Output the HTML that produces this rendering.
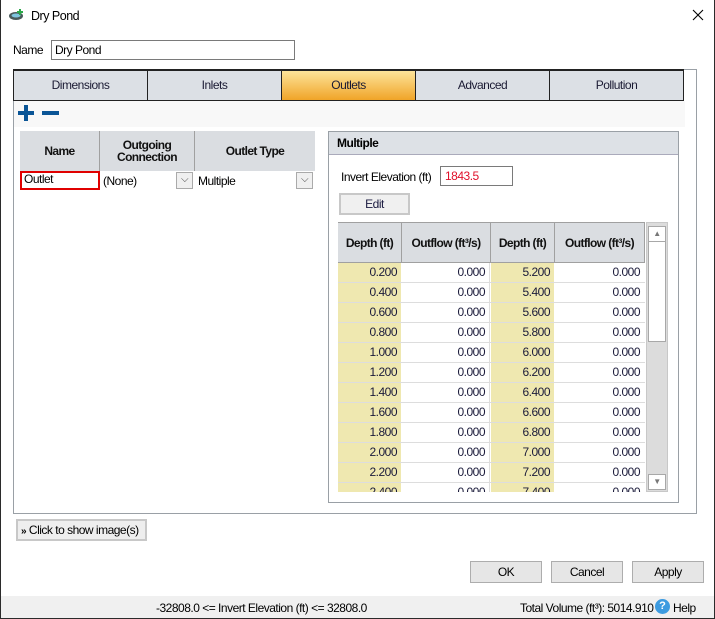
<!DOCTYPE html>
<html><head><meta charset="utf-8"><style>
*{box-sizing:border-box;margin:0;padding:0}
body{width:715px;height:619px;position:relative;background:#fff;font-family:"Liberation Sans",sans-serif;font-size:12px;color:#000;overflow:hidden;letter-spacing:-0.5px;white-space:nowrap}
.a{position:absolute}
.win{left:0;top:0;width:715px;height:619px;border:1px solid #2b2b2b;border-top:none}
.tab{position:absolute;top:70px;height:31px;width:134px;background:#dce0e5;border:1px solid #222;border-left:none;text-align:center;line-height:29px;color:#1a1a33;font-size:12px}
.hd{position:absolute;background:#dadde1;border-right:1px solid #a0a0a0;text-align:center;font-weight:bold;font-size:12px;color:#111;letter-spacing:-0.6px}
.btn{position:absolute;background:#e6e6e6;border:1px solid #adadad;text-align:center;font-size:12px}
.cell{position:absolute;height:19px;line-height:19px;text-align:right;padding-right:4px;font-size:12px;color:#1a1a3a}
.y{background:#efe8b0}
</style></head><body>
<div class="a win"></div>
<!-- title -->
<svg class="a" style="left:8px;top:8px" width="18" height="14" viewBox="0 0 18 14"><ellipse cx="8" cy="8" rx="7" ry="4" fill="#4a5a5a"/><ellipse cx="8" cy="7.5" rx="4.5" ry="2" fill="#7fc6e0"/><path d="M12 1v6M9 4h6" stroke="#2aa84a" stroke-width="2"/></svg>
<div class="a" style="left:31px;top:9px;font-size:12.5px">Dry Pond</div>
<svg class="a" style="left:692px;top:9px" width="12" height="12" viewBox="0 0 12 12"><path d="M1 1L11 11M11 1L1 11" stroke="#000" stroke-width="1.1"/></svg>
<!-- name -->
<div class="a" style="left:13px;top:43px">Name</div>
<div class="a" style="left:51px;top:40px;width:244px;height:20px;border:1px solid #7a7a7a;padding-left:3px;line-height:18px">Dry Pond</div>
<!-- container -->
<div class="a" style="left:13px;top:69px;width:684px;height:445px;border:1px solid #9aa0a6"></div>
<div class="a" style="left:13px;top:69px;width:671px;height:1px;background:#222"></div>
<div class="tab" style="left:13px;border-left:1px solid #222;width:135px">Dimensions</div>
<div class="tab" style="left:148px">Inlets</div>
<div class="tab" style="left:282px;background:linear-gradient(#fde49a,#f0a428)">Outlets</div>
<div class="tab" style="left:416px">Advanced</div>
<div class="tab" style="left:550px">Pollution</div>
<div class="a" style="left:14px;top:101px;width:671px;height:26px;background:#f8f8f8"></div>
<div class="a" style="left:24px;top:105px;width:4px;height:16px;background:#0a5596"></div>
<div class="a" style="left:18px;top:111px;width:16px;height:4px;background:#0a5596"></div>
<div class="a" style="left:42px;top:111px;width:17px;height:4px;background:#0a5596"></div>
<!-- left grid -->
<div class="hd" style="left:20px;top:131px;width:80px;height:40px;line-height:40px">Name</div>
<div class="hd" style="left:100px;top:131px;width:95px;height:40px;line-height:12px;padding-top:8px">Outgoing<br>Connection</div>
<div class="hd" style="left:195px;top:131px;width:120px;height:40px;line-height:40px;border-right:none">Outlet Type</div>
<div class="a" style="left:20px;top:171px;width:80px;height:19px;border:2px solid #e00000;padding-left:2px;line-height:13px">Outlet</div>
<div class="a" style="left:103px;top:174px">(None)</div>
<div class="a" style="left:176px;top:172px;width:17px;height:17px;border:1px solid #aaa;background:#f0f0f0;text-align:center;font-size:10px;line-height:14px;color:#444">⌵</div>
<div class="a" style="left:198px;top:174px">Multiple</div>
<div class="a" style="left:296px;top:172px;width:17px;height:17px;border:1px solid #aaa;background:#f0f0f0;text-align:center;font-size:10px;line-height:14px;color:#444">⌵</div>
<!-- right panel -->
<div class="a" style="left:328px;top:131px;width:351px;height:372px;border:1px solid #9aa0a6"></div>
<div class="a" style="left:329px;top:132px;width:349px;height:23px;background:#dde1e6;border-bottom:1px solid #aab;font-weight:bold;padding-left:8px;line-height:23px">Multiple</div>
<div class="a" style="left:341px;top:170px">Invert Elevation (ft)</div>
<div class="a" style="left:440px;top:166px;width:73px;height:20px;border:1px solid #7a7a7a;color:#e0102a;padding-left:4px;line-height:18px">1843.5</div>
<div class="btn" style="left:339px;top:193px;width:71px;height:22px;line-height:18px;border:2px solid #c8c8c8;background:#f0f0f0;color:#1a1a40">Edit</div>
<div class="a" style="left:338px;top:222px;width:307px;height:270px;overflow:hidden">
<div class="hd" style="left:0;top:0;width:64px;height:40px;line-height:40px;border-top:1px solid #a0a0a0">Depth (ft)</div>
<div class="hd" style="left:64px;top:0;width:89px;height:40px;line-height:40px;border-top:1px solid #a0a0a0">Outflow (ft³/s)</div>
<div class="hd" style="left:153px;top:0;width:64px;height:40px;line-height:40px;border-top:1px solid #a0a0a0">Depth (ft)</div>
<div class="hd" style="left:217px;top:0;width:90px;height:40px;line-height:40px;border-top:1px solid #a0a0a0">Outflow (ft³/s)</div>
<div class="a" style="left:0;top:40px;width:307px;height:1px;background:#a0a0a0"></div>
<div id="rows"></div>
</div>
<!-- scrollbar -->
<div class="a" style="left:646px;top:222px;width:22px;height:270px;background:#dcdcdc;border:1px solid #c8c8c8"></div>
<div class="a" style="left:648px;top:226px;width:18px;height:116px;background:#fff;border:1px solid #a8a8a8"></div>
<div class="a" style="left:648px;top:226px;width:18px;height:16px;background:#fff;border:1px solid #a8a8a8;text-align:center;font-size:8px;line-height:14px;color:#777">▲</div>
<div class="a" style="left:648px;top:474px;width:18px;height:16px;background:#fff;border:1px solid #a8a8a8;text-align:center;font-size:8px;line-height:14px;color:#777">▼</div>
<!-- bottom -->
<div class="btn" style="left:16px;top:519px;width:131px;height:22px;line-height:18px;border:2px solid #c8c8c8;background:#eee;text-align:left;padding-left:3px"><b style="font-size:10px">»</b> Click to show image(s)</div>
<div class="btn" style="left:470px;top:561px;width:72px;height:22px;line-height:20px">OK</div>
<div class="btn" style="left:551px;top:561px;width:72px;height:22px;line-height:20px">Cancel</div>
<div class="btn" style="left:632px;top:561px;width:72px;height:22px;line-height:20px">Apply</div>
<div class="a" style="left:1px;top:596px;width:713px;height:22px;background:#f0f0f0"></div>
<div class="a" style="left:156px;top:601px">-32808.0 &lt;= Invert Elevation (ft) &lt;= 32808.0</div>
<div class="a" style="left:520px;top:601px">Total Volume (ft³): 5014.910</div>
<div class="a" style="left:655px;top:599px;width:15px;height:15px;border-radius:50%;background:#3d9be0;color:#fff;text-align:center;font-weight:bold;font-size:11px;line-height:15px;letter-spacing:0">?</div>
<div class="a" style="left:673px;top:601px">Help</div>
<script>
var h='';for(var i=0;i<12;i++){var t=41+20*i;var d1=(0.2*(i+1)).toFixed(3),d2=(5.2+0.2*i).toFixed(3);
h+='<div class="cell y" style="left:0;top:'+t+'px;width:63px">'+d1+'</div>';
h+='<div class="cell" style="left:64px;top:'+t+'px;width:88px;border-right:1px solid #ddd">0.000</div>';
h+='<div class="cell y" style="left:153px;top:'+t+'px;width:63px">'+d2+'</div>';
h+='<div class="cell" style="left:217px;top:'+t+'px;width:89px">0.000</div>';
h+='<div class="a" style="left:0;top:'+(t+19)+'px;width:307px;height:1px;background:#ddd"></div>';}
document.getElementById('rows').innerHTML=h;
</script>
</body></html>
